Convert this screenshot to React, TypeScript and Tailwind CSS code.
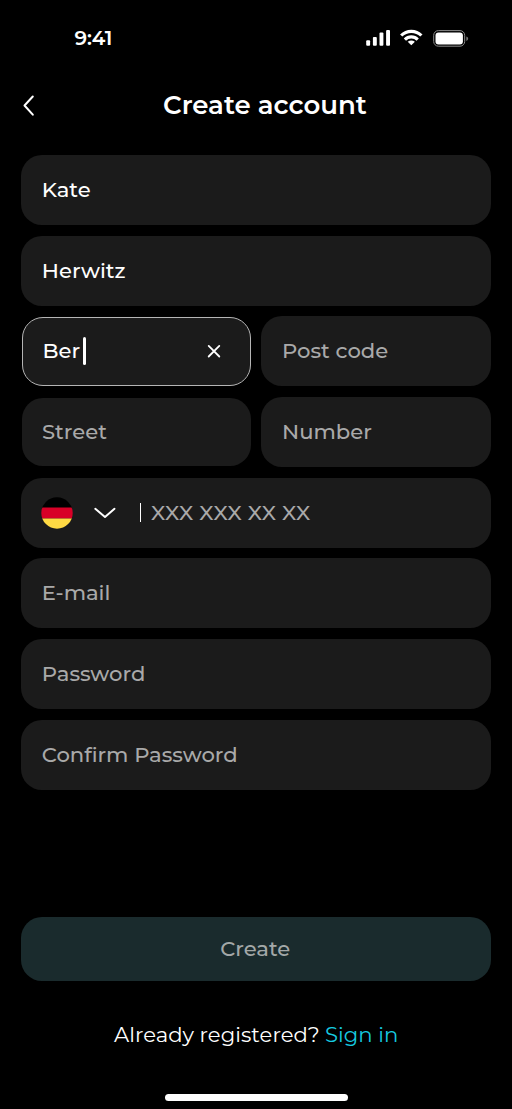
import React, { type ReactNode } from "react";
import { clsx } from "clsx";

function StatusIcons() {
  return (
    <svg width="104" height="20" viewBox="365 28 104 20" fill="#fff" aria-hidden="true">
      <rect x="366.2" y="40.3" width="3.9" height="5.4" rx="1" />
      <rect x="372.9" y="37" width="3.9" height="8.7" rx="1" />
      <rect x="379.5" y="32.6" width="3.9" height="13.1" rx="1" />
      <rect x="386.1" y="29.9" width="3.9" height="15.8" rx="1" />
      <g fill="none" stroke="#fff" strokeWidth="3.2">
        <path d="M401.2 35.5 A14.2 14.2 0 0 1 421.4 35.5" />
        <path d="M404.9 39.6 A9 9 0 0 1 417.7 39.6" />
      </g>
      <path d="M411.3 45.2 L407.7 41.8 Q411.3 39 414.9 41.8 Z" />
      <rect x="433.7" y="30.6" width="31" height="15.6" rx="4.7" fill="none" stroke="#8a8a8a" strokeWidth="1" />
      <rect x="435.5" y="32.4" width="27.4" height="12" rx="3" />
      <path d="M466.3 36.6 Q468.2 37.2 468.2 38.7 Q468.2 40.3 466.3 41 Z" fill="#777" />
    </svg>
  );
}

function Field({ children, inset = false, focused = false }: { children: ReactNode; inset?: boolean; focused?: boolean }) {
  return (
    <div
      className={clsx(
        "flex min-w-0 items-center rounded-[21px] bg-[#1b1b1b] font-medium",
        inset ? "my-[0.7px] ml-[0.7px] h-[68.6px]" : "h-[70px]",
        focused ? "border border-[#b5b5b5] pr-[29px] pl-[19.8px]" : inset ? "pl-[20.3px]" : "pl-[20.8px]",
      )}
    >
      {children}
    </div>
  );
}

function Placeholder({ children }: { children: ReactNode }) {
  return <span className="whitespace-nowrap text-[#a9a9a9]">{children}</span>;
}

export default function App() {
  return (
    <main className="flex h-[1109px] w-[512px] flex-col overflow-hidden bg-black font-['Montserrat','Inter',sans-serif] text-[21.15px] leading-[26px] text-white">
      <header className="flex h-[76px] shrink-0 items-center justify-between pr-[43px] pl-[74.5px]">
        <span className="text-[20px] font-semibold tracking-[-0.1px]">9:41</span>
        <StatusIcons />
      </header>

      <div className="flex h-[79px] shrink-0 items-start pt-[14px] pl-[22px]">
        <button aria-label="Back" className="flex h-8 w-[14px] items-center">
          <svg width="14" height="24" viewBox="0 0 14 24" fill="none" stroke="#fff" strokeWidth="2" strokeLinecap="round" strokeLinejoin="round">
            <path d="M10.8 2.5 L2.5 11.5 L10.8 20.7" />
          </svg>
        </button>
        <h1 className="ml-[127px] text-[26px] leading-[31px] font-semibold whitespace-nowrap">Create account</h1>
      </div>

      <form className="mx-[21px] flex shrink-0 flex-col gap-[10.7px]">
        <Field>Kate</Field>
        <Field>Herwitz</Field>
        <div className="grid grid-cols-2 gap-[10.5px]">
          <Field inset focused>
            <span>Ber</span>
            <span className="ml-[2.5px] h-[28px] w-[3px] rounded-full bg-white" />
            <svg className="ml-auto" width="14" height="14" viewBox="0 0 14 14" stroke="#fff" strokeWidth="1.8" strokeLinecap="round">
              <path d="M1.7 1.9 L12.3 12.5 M12.3 1.9 L1.7 12.5" />
            </svg>
          </Field>
          <Field><Placeholder>Post code</Placeholder></Field>
        </div>
        <div className="grid grid-cols-2 gap-[10.5px]">
          <Field inset><Placeholder>Street</Placeholder></Field>
          <Field><Placeholder>Number</Placeholder></Field>
        </div>
        <Field>
          <svg className="-ml-[0.8px]" width="32" height="32" viewBox="0 0 32 32" aria-label="Germany">
            <defs>
              <clipPath id="flag"><circle cx="16" cy="16" r="15.7" /></clipPath>
            </defs>
            <g clipPath="url(#flag)">
              <rect width="32" height="11" />
              <rect y="10.5" width="32" height="11" fill="#d80027" />
              <rect y="21.5" width="32" height="11" fill="#ffda44" />
            </g>
          </svg>
          <svg className="ml-[20px]" width="24" height="12" viewBox="0 0 24 12" fill="none" stroke="#fff" strokeWidth="2" strokeLinecap="round" strokeLinejoin="round">
            <path d="M2.3 1.8 L12 10 L21.5 1.8" />
          </svg>
          <span className="mr-[10px] ml-[22.5px] h-[19px] w-[1.5px] bg-white" />
          <span className="tracking-[0.2px]"><Placeholder>XXX XXX XX XX</Placeholder></span>
        </Field>
        <Field><Placeholder>E-mail</Placeholder></Field>
        <Field><Placeholder>Password</Placeholder></Field>
        <Field><Placeholder>Confirm Password</Placeholder></Field>
      </form>

      <button className="mx-[21px] mt-[127.6px] h-[64px] shrink-0 rounded-[21px] bg-[#1a2b2d] pr-[1.5px] font-medium text-[#a3a8a8]">
        Create
      </button>

      <p className="mt-[41px] flex shrink-0 pl-[114px] whitespace-nowrap">
        <span className="w-[211px] tracking-[0.05px]">Already registered?</span>
        <a className="tracking-[0.05px] text-[#16cbe0]">Sign in</a>
      </p>

      <div className="mt-auto mb-2 ml-[165px] h-[7px] w-[182.5px] shrink-0 rounded-full bg-white" />
    </main>
  );
}
